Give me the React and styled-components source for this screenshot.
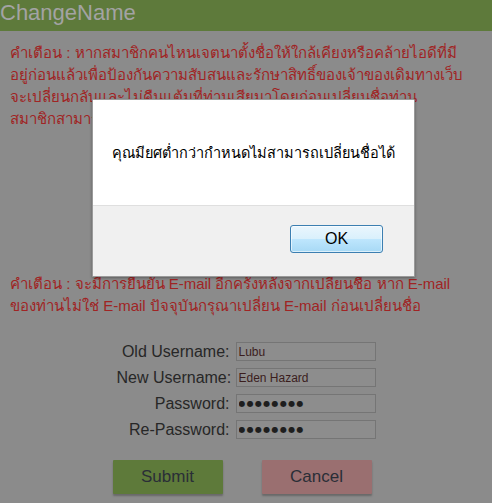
import React from 'react';
import styled, { createGlobalStyle } from 'styled-components';

const GlobalStyle = createGlobalStyle`
  html, body {
    margin: 0;
    padding: 0;
    background: #8b8b8b;
  }
  body {
    font-family: "Liberation Sans", Tahoma, "Noto Sans", sans-serif;
    width: 492px;
    height: 503px;
    overflow: hidden;
  }
`;

const Page = styled.div`
  position: relative;
  width: 492px;
  height: 503px;
`;

const Header = styled.div`
  height: 31px;
  background: #5e7a3b;
  color: #a3a3a3;
  font-size: 22px;
  line-height: 26px;
`;

const Warning = styled.p`
  margin: ${p => p.top}px 0 0;
  padding: 0 10px;
  color: #a02424;
  font-size: 15px;
  line-height: 22px;
  white-space: nowrap;
`;

const Form = styled.div`
  display: grid;
  grid-template-columns: 113px 140px;
  column-gap: 6px;
  row-gap: 7px;
  justify-content: center;
  align-items: center;
  margin-top: 25px;
`;

const Label = styled.label`
  text-align: right;
  font-size: 16px;
  color: #272727;
  white-space: nowrap;
`;

const Field = styled.input`
  box-sizing: border-box;
  height: 19px;
  width: 140px;
  border: 1px solid #757575;
  background: #8d8d8d;
  padding: 0 2px;
  font-family: ${p => (p.masked ? '"DejaVu Sans", sans-serif' : '"Liberation Sans", Tahoma, sans-serif')};
  font-size: ${p => (p.masked ? '8px' : '12px')};
  letter-spacing: ${p => (p.masked ? '1.3px' : 'normal')};
  color: ${p => (p.masked ? '#1e1e1e' : '#3b1d1d')};
  outline: none;
`;

const Actions = styled.div`
  display: flex;
  justify-content: center;
  gap: 39px;
  padding-right: 8px;
  margin-top: 21px;
`;

const ActionButton = styled.button`
  width: 110px;
  height: 34px;
  border: none;
  border-radius: 1px;
  background: ${p => (p.variant === 'cancel' ? '#9a6f70' : '#5e7a3a')};
  box-shadow: 0 2px 2px rgba(0, 0, 0, 0.25);
  color: #2a2e37;
  font-family: "Liberation Sans", Tahoma, sans-serif;
  font-size: 17px;
  padding: 0;
`;

const Dialog = styled.div`
  position: absolute;
  left: 92px;
  top: 99px;
  width: 323px;
  height: 178px;
  display: flex;
  flex-direction: column;
  background: #f0f0f0;
  border: 1px solid #9a9a9a;
  box-sizing: border-box;
  box-shadow: 0 1px 3px rgba(0, 0, 0, 0.35);
  border-radius: 1px;
`;

const DialogBody = styled.div`
  height: 106px;
  background: #ffffff;
  border-bottom: 1px solid #dfdfdf;
  box-sizing: border-box;
  display: flex;
  align-items: center;
  justify-content: center;
  font-size: 14.5px;
  color: #000;
`;

const DialogFooter = styled.div`
  flex: 1;
  display: flex;
  justify-content: flex-end;
  align-items: flex-start;
  padding: 19px 31px 0 0;
`;

const OkButton = styled.button`
  width: 93px;
  height: 28px;
  border: 1px solid #3c7fb1;
  border-radius: 3px;
  background: linear-gradient(#eaf6fd 0%, #d9f0fc 50%, #bee6fd 51%, #a7d9f5 100%);
  box-shadow: inset 0 0 0 1px rgba(255, 255, 255, 0.6);
  font-family: "Liberation Sans", Tahoma, sans-serif;
  font-size: 16px;
  color: #000;
  padding: 0;
`;

export default function App() {
  return (
    <>
      <GlobalStyle />
      <Page>
        <Header>ChangeName</Header>
        <Warning top={11}>
          คำเตือน : หากสมาชิกคนไหนเจตนาตั้งชื่อให้ใกล้เคียงหรือคล้ายไอดีที่มี<br />
          อยู่ก่อนแล้วเพื่อป้องกันความสับสนและรักษาสิทธิ์ของเจ้าของเดิมทางเว็บ<br />
          จะเปลี่ยนกลับและไม่คืนแต้มที่ท่านเสียมาโดยก่อนเปลี่ยนชื่อท่าน<br />
          สมาชิกสามารถเปลี่ยนชื่อได้เพียงครั้งเดียวเท่านั้น
        </Warning>
        <Warning top={143}>
          คำเตือน : จะมีการยืนยัน E-mail อีกครั้งหลังจากเปลี่ยนชื่อ หาก E-mail<br />
          ของท่านไม่ใช่ E-mail ปัจจุบันกรุณาเปลี่ยน E-mail ก่อนเปลี่ยนชื่อ
        </Warning>
        <Form>
          <Label>Old Username:</Label>
          <Field type="text" defaultValue="Lubu" readOnly />
          <Label>New Username:</Label>
          <Field type="text" defaultValue="Eden Hazard" readOnly />
          <Label>Password:</Label>
          <Field type="text" masked defaultValue="●●●●●●●●" readOnly />
          <Label>Re-Password:</Label>
          <Field type="text" masked defaultValue="●●●●●●●●" readOnly />
        </Form>
        <Actions>
          <ActionButton>Submit</ActionButton>
          <ActionButton variant="cancel">Cancel</ActionButton>
        </Actions>
        <Dialog>
          <DialogBody>คุณมียศต่ำกว่ากำหนดไม่สามารถเปลี่ยนชื่อได้</DialogBody>
          <DialogFooter>
            <OkButton>OK</OkButton>
          </DialogFooter>
        </Dialog>
      </Page>
    </>
  );
}
